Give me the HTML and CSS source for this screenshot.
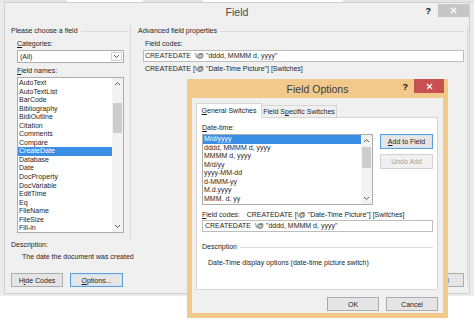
FILE: index.html
```html
<!DOCTYPE html>
<html lang="en">

<head>
    <meta charset="UTF-8">
    <meta name="viewport" content="width=device-width, initial-scale=1.0">
    <link rel="stylesheet" href="styles.css">
    <title>Field</title>
</head>

<body>
    <div class="desk">
        <div class="topstrip">
            <span class="seg gray" style="width: 67px"></span>
            <span class="seg white" style="width: 76px"></span>
            <span class="seg gray" style="width: 60px"></span>
            <span class="seg white" style="width: 140px"></span>
            <span class="seg gray" style="width: 131px"></span>
        </div>
    </div>

    <!-- main Field dialog -->
    <div class="window fieldWindow">
        <div class="titlebar">
            <span class="title">Field</span>
            <div class="controls">
                <span class="help">?</span>
                <span class="close closeGray">
                    <svg width="7" height="7" viewBox="0 0 7 7">
                        <path d="M1 1L6 6M6 1L1 6" stroke="#fff" stroke-width="1.2" />
                    </svg>
                </span>
            </div>
        </div>
        <div class="fieldBody">
            <div class="leftCol">
                <div class="chooseGroup">
                    <div class="groupHead"><span>Please choose a field</span></div>
                    <div class="groupInner">
                        <label class="lbl"><u>C</u>ategories:</label>
                        <div class="select">
                            <span>(All)</span>
                            <span class="selectArrow">
                                <svg width="7" height="5" viewBox="0 0 7 5">
                                    <polyline points="1,1 3.5,3.5 6,1" fill="none" stroke="#555" stroke-width="1" />
                                </svg>
                            </span>
                        </div>
                        <label class="lbl"><u>F</u>ield names:</label>
                        <div class="listbox namesList">
                            <ul>
                                <li>AutoText</li>
                                <li>AutoTextList</li>
                                <li>BarCode</li>
                                <li>Bibliography</li>
                                <li>BidiOutline</li>
                                <li>Citation</li>
                                <li>Comments</li>
                                <li>Compare</li>
                                <li class="selected">CreateDate</li>
                                <li>Database</li>
                                <li>Date</li>
                                <li>DocProperty</li>
                                <li>DocVariable</li>
                                <li>EditTime</li>
                                <li>Eq</li>
                                <li>FileName</li>
                                <li>FileSize</li>
                                <li>Fill-in</li>
                            </ul>
                            <div class="scrollbar namesScroll">
                                <span class="arrow">
                                    <svg width="7" height="5" viewBox="0 0 7 5">
                                        <polyline points="1,4 3.5,1.5 6,4" fill="none" stroke="#555" stroke-width="1" />
                                    </svg>
                                </span>
                                <span class="thumb"></span>
                                <span class="arrow down">
                                    <svg width="7" height="5" viewBox="0 0 7 5">
                                        <polyline points="1,1 3.5,3.5 6,1" fill="none" stroke="#555" stroke-width="1" />
                                    </svg>
                                </span>
                            </div>
                        </div>
                    </div>
                </div>
                <div class="descLabel">Description:</div>
                <div class="descText">The date the document was created</div>
                <div class="buttonRow leftButtons">
                    <button class="btn wide52">H<u>i</u>de Codes</button>
                    <button class="btn wide53 default"><u>O</u>ptions...</button>
                </div>
            </div>
            <div class="rightCol">
                <div class="groupHead advancedHead"><span>Advanced field properties</span></div>
                <label class="lbl codesLbl">Field codes:</label>
                <div class="textbox mainCodes">CREATEDATE  \@ "dddd, MMMM d, yyyy"</div>
                <div class="syntax">CREATEDATE [\@ "Date-Time Picture"] [Switches]</div>
                <div class="buttonRow rightButtons">
                    <button class="btn wide52">OK</button>
                    <button class="btn wide52">Cancel</button>
                </div>
            </div>
        </div>
    </div>

    <!-- Field Options dialog on top -->
    <div class="window optionsWindow">
        <div class="titlebar optionsTitlebar">
            <span class="title">Field Options</span>
            <div class="controls">
                <span class="help">?</span>
                <span class="close closeRed">
                    <svg width="7" height="7" viewBox="0 0 7 7">
                        <path d="M1 1L6 6M6 1L1 6" stroke="#fff" stroke-width="1.2" />
                    </svg>
                </span>
            </div>
        </div>
        <div class="optionsContent">
            <div class="tabs">
                <span class="tab active"><u>G</u>eneral Switches</span>
                <span class="tab">Field S<u>p</u>ecific Switches</span>
            </div>
            <div class="tabPanel">
                <label class="lbl"><u>D</u>ate-time:</label>
                <div class="pickRow">
                    <div class="listbox formatList">
                        <ul>
                            <li class="selected">M/d/yyyy</li>
                            <li>dddd, MMMM d, yyyy</li>
                            <li>MMMM d, yyyy</li>
                            <li>M/d/yy</li>
                            <li>yyyy-MM-dd</li>
                            <li>d-MMM-yy</li>
                            <li>M.d.yyyy</li>
                            <li>MMM. d, yy</li>
                        </ul>
                        <div class="scrollbar formatScroll">
                            <span class="arrow">
                                <svg width="7" height="5" viewBox="0 0 7 5">
                                    <polyline points="1,4 3.5,1.5 6,4" fill="none" stroke="#555" stroke-width="1" />
                                </svg>
                            </span>
                            <span class="thumb"></span>
                            <span class="arrow down">
                                <svg width="7" height="5" viewBox="0 0 7 5">
                                    <polyline points="1,1 3.5,3.5 6,1" fill="none" stroke="#555" stroke-width="1" />
                                </svg>
                            </span>
                        </div>
                    </div>
                    <div class="sideButtons">
                        <button class="btn wide53 default"><u>A</u>dd to Field</button>
                        <button class="btn wide53 disabled">Undo Add</button>
                    </div>
                </div>
                <div class="codesLine"><span><u>F</u>ield codes:</span><span class="codesSyntax">CREATEDATE [\@ "Date-Time Picture"] [Switches]</span></div>
                <div class="textbox optionCodes">CREATEDATE  \@ "dddd, MMMM d, yyyy"</div>
                <div class="groupHead descHead"><span>Description</span></div>
                <div class="optionDesc">Date-Time display options (date-time picture switch)</div>
            </div>
            <div class="buttonRow optionButtons">
                <button class="btn wide52">OK</button>
                <button class="btn wide52">Cancel</button>
            </div>
        </div>
    </div>
</body>

</html>
```

FILE: styles.css
```css
body {
    margin: 0;
    width: 474px;
    height: 320px;
    position: relative;
    overflow: hidden;
    background-color: #ffffff;
    font-family: "Liberation Sans", Arial, sans-serif;
    font-size: 7px;
    color: #1e1e1e;
}

.desk {
    height: 296px;
    background-color: #ebebeb;
}

.topstrip {
    display: flex;
    height: 3px;
}

.seg.gray {
    background-color: #e4e4e4;
}

.seg.white {
    background-color: #ffffff;
}

u {
    text-decoration: underline;
    text-underline-offset: 1px;
}

/* windows */
.window {
    position: absolute;
    box-sizing: border-box;
    display: flex;
    flex-direction: column;
}

.fieldWindow {
    left: 4px;
    top: 2px;
    width: 466px;
    height: 292px;
    background-color: #f0f0f0;
    border: 1px solid #cfcfcf;
}

.titlebar {
    display: grid;
    grid-template-columns: 1fr auto 1fr;
    height: 18px;
    flex: none;
}

.titlebar .title {
    grid-column: 2;
    line-height: 18px;
    font-size: 10.5px;
    color: #4a4a4a;
}

.controls {
    grid-column: 3;
    justify-self: end;
    display: flex;
    align-items: flex-start;
}

.help {
    font-size: 9px;
    font-weight: bold;
    line-height: 16px;
    color: #111;
    margin-right: 7px;
}

.close {
    display: flex;
    align-items: center;
    justify-content: center;
}

.closeGray {
    width: 31px;
    height: 13px;
    margin-top: 1px;
    background-color: #c6c6c6;
}

.fieldBody {
    flex: 1;
    display: flex;
    gap: 2px;
    padding: 5px 1px 6px 2px;
}

.leftCol {
    width: 124px;
    display: flex;
    flex-direction: column;
}

.chooseGroup {
    box-sizing: border-box;
    height: 214px;
    border-right: 1px solid #d8d8d8;
}

.groupHead {
    display: flex;
    align-items: center;
    gap: 3px;
    height: 10px;
    line-height: 10px;
    padding-left: 4px;
    padding-right: 2px;
}

.groupHead::after {
    content: "";
    flex: 1;
    height: 1px;
    background-color: #dcdcdc;
}

.groupInner {
    padding-left: 10px;
    padding-right: 6px;
}

.lbl {
    display: block;
    line-height: 10px;
    margin-top: 3px;
    margin-bottom: 1px;
}

.select {
    box-sizing: border-box;
    height: 13px;
    border: 1px solid #acacac;
    background-color: #fff;
    display: flex;
    align-items: center;
    padding-left: 2px;
}

.selectArrow {
    margin-left: auto;
    margin-right: 1px;
    box-sizing: border-box;
    width: 11px;
    height: 9px;
    border: 1px solid #d4d4d4;
    display: flex;
    align-items: center;
    justify-content: center;
}

.listbox {
    box-sizing: border-box;
    border: 1px solid #acacac;
    background-color: #fff;
    display: flex;
}

.listbox ul {
    flex: 1;
    list-style: none;
    margin: 0;
    padding: 0;
}

.listbox li {
    line-height: 8.55px;
    height: 8.55px;
    padding-left: 1px;
    white-space: nowrap;
}

.listbox li.selected {
    background-color: #3a8ee6;
    color: #fff;
}

.namesList {
    height: 156px;
}

.namesList ul {
    padding-top: 1px;
}

.scrollbar {
    width: 11px;
    background-color: #f2f2f2;
    display: flex;
    flex-direction: column;
    align-items: center;
}

.scrollbar .arrow {
    height: 11px;
    display: flex;
    align-items: center;
    justify-content: center;
}

.scrollbar .arrow.down {
    margin-top: auto;
}

.scrollbar .thumb {
    width: 9px;
    background-color: #cdcdcd;
}

.namesScroll .thumb {
    margin-top: 14px;
    height: 30px;
}

.descLabel {
    line-height: 10px;
    padding-left: 4px;
}

.descText {
    line-height: 10px;
    margin-top: 2px;
    padding-left: 15px;
    white-space: nowrap;
}

.buttonRow {
    display: flex;
    gap: 7px;
}

.leftButtons {
    margin-top: 11px;
    padding-left: 4px;
}

.btn {
    box-sizing: border-box;
    height: 14px;
    padding: 0;
    border: 1px solid #acacac;
    background-color: #e5e5e5;
    font-family: inherit;
    font-size: 7px;
    color: #1e1e1e;
}

.btn.default {
    border-color: #5b9fe0;
    box-shadow: inset 0 0 0 1px #cfe3f7;
}

.btn.disabled {
    color: #a3a3a3;
    border-color: #d2d2d2;
    background-color: #f0f0f0;
}

.wide52 {
    width: 52px;
}

.wide53 {
    width: 53px;
}

.rightCol {
    box-sizing: border-box;
    width: 335px;
    border-right: 1px solid #d8d8d8;
    display: flex;
    flex-direction: column;
}

.advancedHead {
    padding-left: 5px;
    padding-right: 3px;
}

.codesLbl {
    padding-left: 12px;
}

.textbox {
    box-sizing: border-box;
    height: 12px;
    line-height: 10px;
    border: 1px solid #bdbdbd;
    background-color: #fff;
    padding-left: 1px;
    white-space: pre;
}

.mainCodes {
    margin-left: 10px;
    margin-right: 3px;
}

.syntax {
    line-height: 10px;
    margin-top: 2px;
    padding-left: 12px;
}

.rightButtons {
    margin-top: auto;
    justify-content: flex-end;
    padding-right: 3px;
    gap: 6px;
}

/* Field Options */
.optionsWindow {
    left: 187px;
    top: 79px;
    width: 261px;
    height: 239px;
    background-color: #f2c98a;
}

.optionsTitlebar {
    height: 19px;
}

.optionsTitlebar .title {
    line-height: 20px;
    color: #3c3c3c;
}

.optionsTitlebar .help {
    line-height: 17px;
    margin-right: 6px;
}

.closeRed {
    width: 30px;
    height: 14px;
    margin-right: 4px;
    background-color: #c85050;
}

.optionsContent {
    flex: 1;
    margin: 0 5px 5px;
    background-color: #f0f0f0;
    padding: 5px 5px 0 4px;
    display: flex;
    flex-direction: column;
}

.tabs {
    display: flex;
    align-items: flex-end;
    height: 14px;
}

.tab {
    box-sizing: border-box;
    border: 1px solid #d5d5d5;
    border-bottom: none;
    text-align: center;
    white-space: nowrap;
}

.tab.active {
    width: 66px;
    height: 15px;
    line-height: 14px;
    margin-bottom: -1px;
    background-color: #fff;
    position: relative;
    z-index: 1;
}

.tab:not(.active) {
    width: 75px;
    height: 12px;
    line-height: 11px;
    border-left: none;
    background-color: #f0f0f0;
}

.tabPanel {
    box-sizing: border-box;
    width: 242px;
    height: 173px;
    border: 1px solid #d5d5d5;
    background-color: #fff;
    padding: 2px 0 0 5px;
}

.pickRow {
    display: flex;
    align-items: flex-start;
}

.formatList {
    width: 171px;
    height: 71px;
}

.formatScroll .thumb {
    margin-top: 1px;
    height: 21px;
}

.sideButtons {
    margin-left: 7px;
    display: flex;
    flex-direction: column;
    gap: 5px;
}

.sideButtons .btn {
    height: 15px;
}

.codesLine {
    line-height: 10px;
    margin-top: 5px;
    white-space: nowrap;
}

.codesSyntax {
    margin-left: 7px;
}

.optionCodes {
    width: 231px;
    padding-left: 2px;
}

.descHead {
    width: 231px;
    box-sizing: border-box;
    margin-top: 10px;
    padding-left: 0;
    padding-right: 0;
}

.optionDesc {
    line-height: 10px;
    margin-top: 6px;
    padding-left: 6px;
}

.optionButtons {
    margin-top: 7px;
    justify-content: flex-end;
}
```
